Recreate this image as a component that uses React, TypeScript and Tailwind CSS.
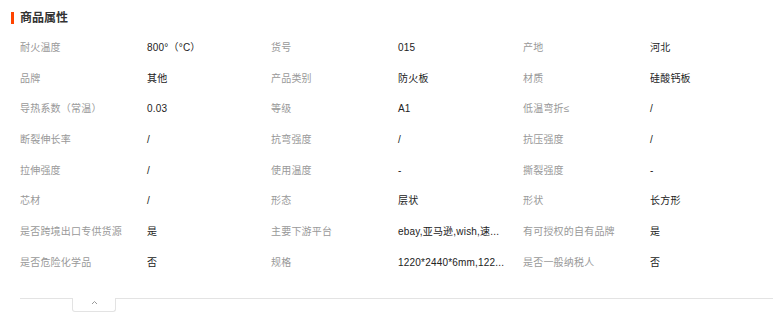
const rows: [string, string, string, string, string, string][] = [
  ["耐火温度", "800°（°C）", "货号", "015", "产地", "河北"],
  ["品牌", "其他", "产品类别", "防火板", "材质", "硅酸钙板"],
  ["导热系数（常温）", "0.03", "等级", "A1", "低温弯折≤", "/"],
  ["断裂伸长率", "/", "抗弯强度", "/", "抗压强度", "/"],
  ["拉伸强度", "/", "使用温度", "-", "撕裂强度", "-"],
  ["芯材", "/", "形态", "层状", "形状", "长方形"],
  ["是否跨境出口专供货源", "是", "主要下游平台", "ebay,亚马逊,wish,速...", "有可授权的自有品牌", "是"],
  ["是否危险化学品", "否", "规格", "1220*2440*6mm,122...", "是否一般纳税人", "否"],
]

export default function App() {
  return (
    <div
      className="w-[777px] h-[329px] bg-white overflow-hidden"
      style={{ fontFamily: '"Liberation Sans", "Noto Sans CJK SC", sans-serif' }}
    >
      <div className="flex items-center gap-[6px] pl-[11px] pt-[10px]">
        <span className="w-[3px] h-[12px] bg-[#ff4400]" />
        <h2 className="text-[12px] leading-[16px] font-bold text-[#333]">商品属性</h2>
      </div>

      <div className="ml-[20px] mt-[6px] w-[753px]">
        {rows.map((r, i) => (
          <div key={i} className="grid grid-cols-[127px_124px_127px_125px_127px_123px] h-[30.7px] items-center text-[10px] tracking-[0.2px]">
            <span className="text-[#999] whitespace-nowrap">{r[0]}</span>
            <span className="text-[#222] whitespace-nowrap">{r[1]}</span>
            <span className="text-[#999] whitespace-nowrap">{r[2]}</span>
            <span className="text-[#222] whitespace-nowrap">{r[3]}</span>
            <span className="text-[#999] whitespace-nowrap">{r[4]}</span>
            <span className="text-[#222] whitespace-nowrap">{r[5]}</span>
          </div>
        ))}
      </div>

      <div className="ml-[20px] mt-[20px] w-[753px] flex items-start">
        <div className="w-[52px] border-t border-[#e3e3e3]" />
        <div className="w-[44px] h-[14px] border-x border-b border-[#e3e3e3] rounded-b-[3px] flex justify-center pt-[2px]">
          <svg width="7" height="5" viewBox="0 0 7 5" fill="none">
            <path d="M1 4 L3.5 1.5 L6 4" stroke="#999" strokeWidth="1" />
          </svg>
        </div>
        <div className="flex-1 border-t border-[#e3e3e3]" />
      </div>
    </div>
  )
}
